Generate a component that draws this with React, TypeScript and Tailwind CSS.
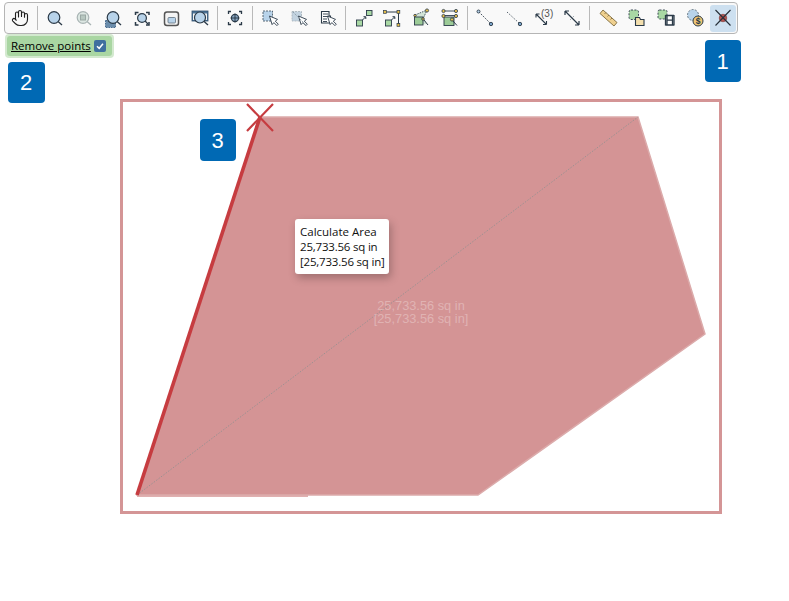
import React from "react";
import { Hand } from "lucide-react";

const BL = "#b8d3ea";
const DK = "#2b3a48";
const GR = "#a9d8a4";
const YL = "#e8c04a";

const Svg = ({ children }: { children: React.ReactNode }) => (
  <svg width="22" height="22" viewBox="0 0 22 22" fill="none">{children}</svg>
);

const Lens = ({ x = 10, y = 10.5, r = 5.8, c = DK, f = BL, ex = 18, ey = 18 }: { x?: number; y?: number; r?: number; c?: string; f?: string; ex?: number; ey?: number }) => (
  <>
    <line x1={x + r * 0.7} y1={y + r * 0.7} x2={ex} y2={ey} stroke={c} strokeWidth="1.3" />
    <circle cx={x} cy={y} r={r} fill={f} stroke={c} strokeWidth="1.2" />
  </>
);

const Cursor = ({ x = 0, y = 0 }: { x?: number; y?: number }) => (
  <path transform={`translate(${x} ${y})`} d="M0 0 L2.6 8.6 L4.4 6.6 L7.4 9.6 L8.8 8.2 L5.8 5.2 L8 3.4 Z" fill="#fff" stroke={DK} strokeWidth="0.9" strokeLinejoin="round" />
);

const Dot = ({ x, y, c = YL, r = 1.6 }: { x: number; y: number; c?: string; r?: number }) => (
  <circle cx={x} cy={y} r={r} fill={c} stroke={DK} strokeWidth="0.8" />
);

const Sq = ({ x, y, w = 6, h = 6 }: { x: number; y: number; w?: number; h?: number }) => (
  <rect x={x} y={y} width={w} height={h} fill={GR} stroke={DK} strokeWidth="0.9" />
);

const icons: Record<string, React.ReactNode> = {
  zoom: <Svg><Lens /></Svg>,
  zoomGray: (
    <Svg>
      <Lens c="#a9b4b4" f="#dde7e3" />
      <rect x="7.5" y="8" width="5" height="5" fill="#b7c7c0" stroke="#9aa8a4" />
    </Svg>
  ),
  zoomArea: (
    <Svg>
      <rect x="3.5" y="13.5" width="10" height="7" fill="#6a8cab" stroke="#4a6d90" strokeDasharray="1.5 1" />
      <Lens x={11} y={10.5} r={5.8} ex={19} ey={18} />
    </Svg>
  ),
  zoomFit: (
    <Svg>
      <path d="M4.5 8V5.5H7.5 M15 5.5H18V8 M4.5 15V18H7.5 M15 18H18V15" stroke={DK} strokeWidth="1.5" />
      <Lens x={11} y={11} r={4.4} ex={17} ey={17} />
    </Svg>
  ),
  zoomWin: (
    <Svg>
      <rect x="4.5" y="5" width="14" height="13.5" rx="2.5" fill="#f4f4f4" stroke="#555" strokeWidth="1.5" />
      <rect x="8" y="10.5" width="7.5" height="5.5" rx="1" fill={BL} stroke="#5f6f7c" strokeWidth="0.8" />
    </Svg>
  ),
  zoomPage: (
    <Svg>
      <rect x="3" y="4" width="16" height="10" fill="#4d7396" stroke="#2f4e6c" strokeWidth="0.8" />
      <rect x="4" y="6.5" width="14" height="6.5" fill="#f4f4f4" />
      <Lens x={11} y={10.5} r={5.5} ex={19} ey={18} />
    </Svg>
  ),
  center: (
    <Svg>
      <path d="M4.5 7V4.5H7 M15 4.5H17.5V7 M4.5 15V17.5H7 M15 17.5H17.5V15" stroke={DK} strokeWidth="1.3" />
      <circle cx="11" cy="11" r="3.6" fill="#8aa8c4" stroke={DK} strokeWidth="1.1" />
      <path d="M11 6.5V15.5 M6.5 11H15.5" stroke={DK} strokeWidth="1" />
    </Svg>
  ),
  sel: (
    <Svg>
      <rect x="4" y="4" width="9.5" height="10" fill={BL} stroke="#4a5a68" strokeWidth="0.9" strokeDasharray="2 1" />
      <Cursor x={10.5} y={9} />
    </Svg>
  ),
  selGray: (
    <Svg>
      <rect x="4" y="4.5" width="9.5" height="9.5" fill="#c3d3e0" stroke="#a5b0b8" strokeWidth="0.8" strokeDasharray="2 1" />
      <Cursor x={10.5} y={9} />
      <path d="M5 5L18 18" stroke="#8fa0ac" strokeWidth="1" strokeDasharray="1.5 1" />
    </Svg>
  ),
  selText: (
    <Svg>
      <path d="M4.5 4.5H12V9H13.5V16H4.5Z" fill="#fff" stroke={DK} strokeWidth="1.1" />
      <path d="M6 7H11 M6 9.5H11 M6 12H10 M6 14.5H10" stroke={DK} strokeWidth="0.9" />
      <Cursor x={10.5} y={9} />
    </Svg>
  ),
  draw1: (
    <Svg>
      <Sq x={4.5} y={13} />
      <Sq x={14.5} y={3.5} w={5.5} h={5} />
      <path d="M10.5 13 L13.5 10 M11.5 9.7H13.8V12" stroke={DK} strokeWidth="1" />
    </Svg>
  ),
  draw2: (
    <Svg>
      <path d="M4 5H17.5V18" stroke={DK} strokeWidth="1" />
      <rect x="2.5" y="3.5" width="2.8" height="2.8" fill={YL} stroke={DK} strokeWidth="0.7" />
      <rect x="16" y="3.5" width="2.8" height="2.8" fill={YL} stroke={DK} strokeWidth="0.7" />
      <rect x="16" y="16.5" width="2.8" height="2.8" fill={YL} stroke={DK} strokeWidth="0.7" />
      <Sq x={4.5} y={13} />
      <path d="M10.5 13 L13.5 10 M11.5 9.7H13.8V12" stroke={DK} strokeWidth="1" />
    </Svg>
  ),
  draw3: (
    <Svg>
      <path d="M5 8 L17 3 L14 11 L17 17 L5 18 Z" fill="#d2e4d6" />
      <rect x="4.5" y="10" width="8.5" height="8" fill="#9ccb97" stroke={DK} strokeWidth="0.9" />
      <path d="M5 8 L17 3 L13 12" stroke={DK} strokeWidth="0.8" strokeDasharray="1.5 1" />
      <Dot x={17} y={3.5} />
      <Dot x={5} y={8.5} r={1.2} />
      <Dot x={13} y={12} r={1.3} />
      <path d="M14 13L18 18" stroke={DK} strokeWidth="1" />
    </Svg>
  ),
  draw4: (
    <Svg>
      <path d="M5 4H16 M5 8.5H16" stroke={DK} strokeWidth="0.9" />
      <rect x="5" y="10" width="10" height="8.5" fill="#9ccb97" stroke={DK} strokeWidth="0.9" />
      <Dot x={4.5} y={4} />
      <Dot x={17} y={4} />
      <Dot x={4.5} y={9} />
      <Dot x={17} y={9} />
      <Dot x={13} y={12.5} />
      <path d="M14 14L18 18.5" stroke={DK} strokeWidth="1" />
    </Svg>
  ),
  line1: (
    <Svg>
      <path d="M5 5L16 16" stroke={DK} strokeWidth="0.9" strokeDasharray="1.5 1.2" />
      <circle cx="4.5" cy="4.5" r="1.5" fill={BL} stroke={DK} strokeWidth="0.9" />
      <circle cx="17" cy="17" r="1.7" fill="#7aa3c8" stroke={DK} strokeWidth="0.9" />
    </Svg>
  ),
  line2: (
    <Svg>
      <path d="M4 5L16 16" stroke={DK} strokeWidth="0.8" strokeDasharray="1.5 1.5" />
      <circle cx="17" cy="17" r="1.7" fill="#7aa3c8" stroke={DK} strokeWidth="0.9" />
    </Svg>
  ),
  dim3: (
    <Svg>
      <path d="M4 7L14.5 17.5 M4 7V10.5 M4 7H7.5 M14.5 17.5V14 M14.5 17.5H11" stroke={DK} strokeWidth="1.1" />
    </Svg>
  ),
  dim: (
    <Svg>
      <path d="M4 4L18 18 M4 4V8 M4 4H8 M18 18V14 M18 18H14" stroke={DK} strokeWidth="1.2" />
      <path d="M9 13L13 9" stroke="#9aa2a8" strokeWidth="0.9" />
    </Svg>
  ),
  ruler: (
    <Svg>
      <path d="M7 3L21 15.5L18 19L4 6.5Z" fill="#efd08f" stroke="#7d6a3c" strokeWidth="0.9" />
      <path d="M8.5 7L10 5.5 M11.5 9.5L13 8 M14.5 12.5L16 11" stroke="#7d6a3c" strokeWidth="0.8" />
    </Svg>
  ),
  copy: (
    <Svg>
      <rect x="4" y="3" width="9.5" height="9.5" rx="2" fill={GR} stroke={DK} strokeWidth="0.9" strokeDasharray="2 1.4" />
      <path d="M10.5 10.5H14.5L15.5 12.5H19V18.5H10.5Z" fill="#f3dfae" stroke={DK} strokeWidth="1.1" />
    </Svg>
  ),
  film: (
    <Svg>
      <rect x="4" y="3" width="9" height="9" rx="1.5" fill={GR} stroke={DK} strokeWidth="0.9" strokeDasharray="2 1.4" />
      <rect x="12" y="8" width="8" height="10.5" fill="#fff" />
      <path d="M11.5 8V18.5 M20 8V18.5 M13 8V18.5 M18.5 8V18.5 M11.5 8.5H20 M13 13.2H18.5 M11.5 18H20" stroke={DK} strokeWidth="1.3" />
    </Svg>
  ),
  cost: (
    <Svg>
      <circle cx="10" cy="8" r="5.5" fill={BL} stroke="#5c6c78" strokeWidth="0.9" strokeDasharray="2 1.4" />
      <circle cx="15" cy="14" r="5" fill="#efc674" stroke={DK} strokeWidth="1" />
      <text x="15" y="17" fontSize="8.5" fontWeight="700" textAnchor="middle" fill={DK} fontFamily="Liberation Sans">$</text>
    </Svg>
  ),
  remove: (
    <Svg>
      <circle cx="11" cy="11" r="3.8" fill="#b5524f" stroke="#7a3a38" strokeWidth="0.6" />
      <path d="M3.5 3L18.5 18.5 M18.5 3L3.5 18.5" stroke="#26303a" strokeWidth="1.1" />
    </Svg>
  ),
};

const Sep = () => <div className="w-px h-[24px] mx-[1px] bg-[#b9b9b9] shrink-0" />;

const Btn = ({ children, active }: { children: React.ReactNode; active?: boolean }) => (
  <div className={`w-[26px] h-[27px] shrink-0 flex items-center justify-center rounded-[3px] ${active ? "bg-[#cde0f0]" : ""}`}>{children}</div>
);

const groups = [
  ["zoom", "zoomGray", "zoomArea", "zoomFit", "zoomWin", "zoomPage"],
  ["center"],
  ["sel", "selGray", "selText"],
  ["draw1", "draw2", "draw3", "draw4"],
  ["line1", "line2", "dim3", "dim"],
  ["ruler", "copy", "film", "cost"],
];

const Badge = ({ n, className }: { n: string; className: string }) => (
  <div className={`absolute flex items-center justify-center pr-[1px] rounded-[4px] bg-[#0069b4] text-white text-[22px] ${className}`} style={{ fontFamily: '"Liberation Sans", sans-serif' }}>
    {n}
  </div>
);

export default function App() {
  return (
    <div className="relative w-[789px] h-[601px] overflow-hidden bg-white" style={{ fontFamily: '"Open Sans", "Noto Sans", sans-serif' }}>
      <div className="absolute left-[4px] top-[2px] w-[734px] h-[32px] flex items-center gap-[3px] pl-[2px] border border-[#b5b5b5] rounded-[4px] bg-[#f9f9f9]">
        <Btn><Hand size={18} strokeWidth={1.5} color="#1f1f1f" /></Btn>
        {groups.map((g, i) => (
          <React.Fragment key={i}>
            <Sep />
            {g.map((k) => {
              if (k === "dim3") {
                return (
                  <Btn key={k}>
                    <div className="relative w-[22px] h-[22px]">
                      {icons[k]}
                      <span className="absolute left-[9px] top-[1px] text-[10px] leading-[12px] text-[#555]" style={{ fontFamily: '"Liberation Sans", sans-serif' }}>(3)</span>
                    </div>
                  </Btn>
                );
              }
              return <Btn key={k}>{icons[k]}</Btn>;
            })}
          </React.Fragment>
        ))}
        <Btn active>{icons.remove}</Btn>
      </div>

      <div className="absolute left-[5px] top-[34px] w-[109px] h-[24px] p-[2px] rounded-[4px] bg-[#d3e9cf]">
        <div className="h-full pl-[4px] flex items-center gap-[3px] rounded-[3px] bg-[#a9d6a2]">
          <span className="text-[11.5px] leading-[16px] underline text-black">Remove points</span>
          <div className="w-[12px] h-[12px] rounded-[2px] bg-[#3f6f9f] flex items-center justify-center">
            <svg width="10" height="10" viewBox="0 0 10 10" fill="none"><path d="M2 5.2L4.2 7.3L8 2.8" stroke="#fff" strokeWidth="1.5" /></svg>
          </div>
        </div>
      </div>

      <div className="absolute left-[120px] top-[99px] w-[602px] h-[415px] border-[3px] border-[#d49596]" />

      <svg className="absolute left-0 top-0" width="789" height="601" viewBox="0 0 789 601" fill="none">
        <path d="M137 495 L137 497 L308 497 L308 495 Z" fill="#e0b0b0" />
        <polygon points="137,495 260,117 638,117 705,334 478,495" fill="#d49495" stroke="#dcabab" strokeWidth="1.5" />
        <line x1="137" y1="495" x2="638" y2="117" stroke="#8f8f8f" strokeWidth="0.8" strokeDasharray="1.5 1.5" />
        <line x1="137" y1="495" x2="260" y2="117" stroke="#c63c40" strokeWidth="3.6" />
        <path d="M247 104L273 131 M273 104L247 131" stroke="#c63c40" strokeWidth="2.2" />
      </svg>

      <div className="absolute left-[341px] top-[299px] w-[160px] text-center text-[12.8px] leading-[13px] text-white/30" style={{ fontFamily: '"Liberation Sans", sans-serif' }}>
        <div>25,733.56 sq in</div>
        <div>[25,733.56 sq in]</div>
      </div>

      <div className="absolute left-[295px] top-[219px] w-[94px] h-[55px] pl-[5px] pt-[5px] rounded-[3px] bg-white text-[11.5px] leading-[15px] text-[#111] whitespace-nowrap shadow-[2px_4px_8px_rgba(0,0,0,0.25)]">
        <div>Calculate Area</div>
        <div className="tracking-[-0.2px]">25,733.56 sq in</div>
        <div className="tracking-[-0.2px]">[25,733.56 sq in]</div>
      </div>

      <Badge n="1" className="left-[705px] top-[40px] w-[36px] h-[42px]" />
      <Badge n="2" className="left-[8px] top-[62px] w-[37px] h-[41px]" />
      <Badge n="3" className="left-[200px] top-[119px] w-[36px] h-[42px]" />
    </div>
  );
}
